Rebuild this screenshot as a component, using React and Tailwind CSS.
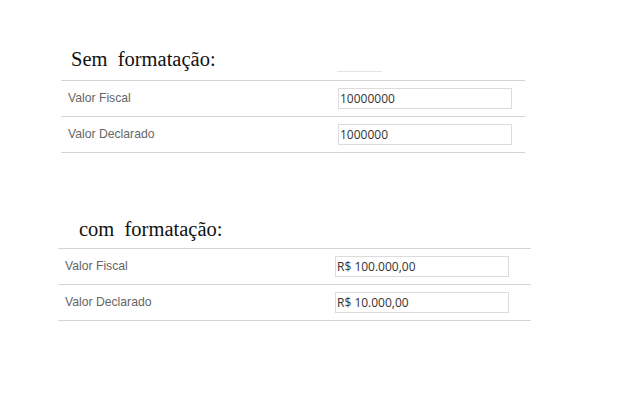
const serif = { fontFamily: '"Liberation Serif", "Times New Roman", serif' };

function Row({ label, value }) {
  return (
    <div className="flex h-[36px] items-center border-t border-[#d4d4d4]">
      <span className="w-[277px] shrink-0 pl-[7px] font-['Liberation_Sans',Arial,sans-serif] text-[12.2px] text-[#666]">
        {label}
      </span>
      <input
        readOnly
        value={value}
        className="h-[21px] w-[174px] border border-[#dcdcdc] pl-[1px] font-['Open_Sans',sans-serif] text-[12px] text-[#333] outline-none"
      />
    </div>
  );
}

export default function App() {
  return (
    <div className="min-h-screen bg-white pt-[47px]">
      {/* Sem formatação */}
      <div className="ml-[61px] w-[464px]">
        <div className="flex h-[26px]">
          <h2 style={serif} className="w-[276px] shrink-0 pl-[10px] text-[20.5px] leading-[24px] font-normal text-[#111]">
            Sem&nbsp; formatação:
          </h2>
          <div className="mb-[1px] h-px w-[45px] self-end bg-[#e3e3e3]"></div>
        </div>
        <div className="mt-[7px] border-b border-[#d4d4d4]">
          <Row label="Valor Fiscal" value="10000000" />
          <Row label="Valor Declarado" value="1000000" />
        </div>
      </div>

      {/* com formatação */}
      <div className="ml-[58px] mt-[64px] w-[473px]">
        <h2 style={serif} className="h-[24px] pl-[21px] text-[20.5px] leading-[24px] font-normal text-[#111]">
          com&nbsp; formatação:
        </h2>
        <div className="mt-[7px] border-b border-[#d4d4d4]">
          <Row label="Valor Fiscal" value="R$ 100.000,00" />
          <Row label="Valor Declarado" value="R$ 10.000,00" />
        </div>
      </div>
    </div>
  );
}
